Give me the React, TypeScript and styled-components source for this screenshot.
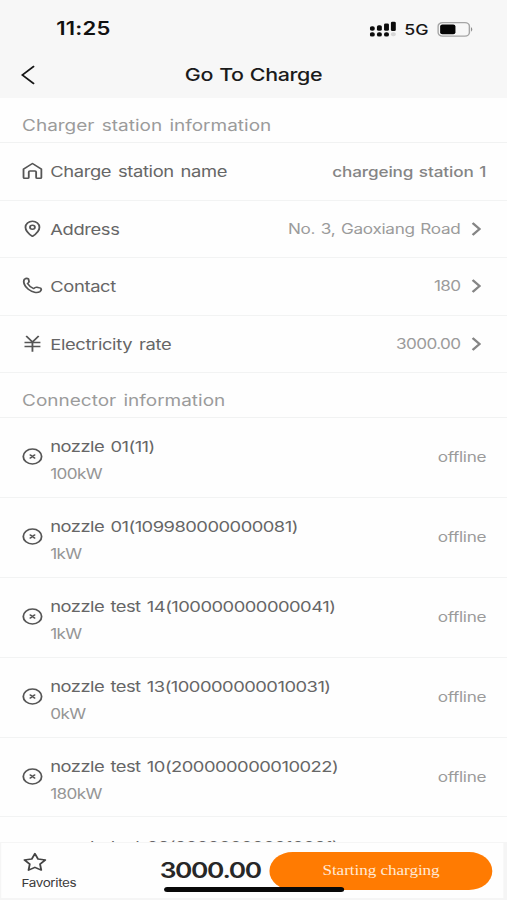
import React from 'react';
import styled, { createGlobalStyle } from 'styled-components';

const STRETCH = 507 / 414;

const GlobalStyle = createGlobalStyle`
  *, *::before, *::after { box-sizing: border-box; }
  html, body { margin: 0; padding: 0; background: #fefefe; overflow: hidden; }
  body { font-family: Inter, "Liberation Sans", sans-serif; }
`;

const Viewport = styled.div`
  width: 507px;
  height: 900px;
  overflow: hidden;
`;

const Screen = styled.div`
  width: 414px;
  height: 900px;
  display: flex;
  flex-direction: column;
  background: #fefefe;
  transform: scaleX(${STRETCH});
  transform-origin: 0 0;
`;

const Header = styled.header`
  flex: none;
  height: 98px;
  background: #f7f7f7;
`;

const StatusBar = styled.div`
  display: flex;
  align-items: center;
  justify-content: space-between;
  height: 50px;
  padding: 8px 27px 0 46px;
`;

const Clock = styled.span`
  font-size: 18px;
  font-weight: 600;
  line-height: 22px;
  letter-spacing: 0.15px;
  color: #111;
`;

const StatusIcons = styled.div`
  display: flex;
  align-items: center;
`;

const Network = styled.span`
  margin: 1px 7px 0 6px;
  font-size: 14.5px;
  font-weight: 500;
  line-height: 20px;
  color: #161616;
`;

const NavBar = styled.div`
  display: grid;
  grid-template-columns: 60px 1fr 60px;
  align-items: center;
  height: 48px;
`;

const BackButton = styled.button`
  display: flex;
  margin: 2px 0 0 17px;
  padding: 0;
  border: 0;
  background: none;
`;

const Title = styled.h1`
  margin: 1px 0 0;
  font-size: 17.5px;
  font-weight: 500;
  line-height: 22px;
  letter-spacing: -0.3px;
  word-spacing: 0.6px;
  text-align: center;
  color: #1b1b1b;
`;

const Content = styled.main`
  flex: 1;
  min-height: 0;
  overflow: hidden;
`;

const SectionTitle = styled.h2`
  display: flex;
  align-items: center;
  height: 45px;
  margin: 0;
  padding: 11px 18px 0;
  border-bottom: 1px solid #f1f2f2;
  font-size: 15.5px;
  font-weight: 400;
  word-spacing: 1.6px;
  white-space: nowrap;
  color: #9b9b9b;
`;

const InfoRow = styled.div`
  display: flex;
  align-items: center;
  height: 57.5px;
  padding: 0 17px 0 18px;
  border-bottom: 1px solid #f2f3f3;
`;

const IconSlot = styled.span`
  flex: none;
  display: flex;
  justify-content: center;
  width: 17px;
  margin-right: 6px;
  color: #555;
`;

const Label = styled.span`
  flex: 1;
  margin-top: 2px;
  font-size: 15px;
  line-height: 20px;
  letter-spacing: -0.3px;
  word-spacing: 1.6px;
  color: #666;
`;

const Value = styled.span<{ $strong?: boolean }>`
  margin-top: ${({ $strong }) => ($strong ? '1px' : '0')};
  font-size: 14px;
  font-weight: ${({ $strong }) => ($strong ? 500 : 400)};
  line-height: 20px;
  letter-spacing: ${({ $strong }) => ($strong ? '-0.12px' : '-0.26px')};
  word-spacing: 1px;
  color: ${({ $strong }) => ($strong ? '#858585' : '#9b9b9b')};
`;

const Amount = styled(Value)`
  letter-spacing: -0.5px;
`;

const Chevron = styled.svg`
  flex: none;
  margin: 0 4px 0 9px;
`;

const ConnectorRow = styled(InfoRow)`
  height: 79.9px;
`;

const ConnectorText = styled.div`
  flex: 1;
  display: flex;
  flex-direction: column;
  gap: 7px;
  padding-top: 7px;
`;

const ConnectorName = styled.span`
  font-size: 15px;
  line-height: 20px;
  letter-spacing: -0.42px;
  word-spacing: 1.3px;
  white-space: nowrap;
  color: #666;
`;

const Power = styled.span`
  font-size: 14px;
  line-height: 20px;
  letter-spacing: -0.5px;
  color: #959595;
`;

const Footer = styled.footer`
  position: relative;
  flex: none;
  display: flex;
  align-items: flex-start;
  height: 58px;
  padding: 9px 8px 0 16.5px;
  border: 1px solid #f5f5f5;
  border-right-width: 3px;
  border-bottom-width: 2px;
  background: #fefefe;
`;

const Favorite = styled.button`
  display: flex;
  flex-direction: column;
  align-items: flex-start;
  gap: 4px;
  width: 113px;
  padding: 0;
  border: 0;
  background: none;
  font-family: inherit;
  font-size: 11px;
  line-height: 15px;
  letter-spacing: -0.3px;
  color: #3b3b3b;
`;

const Total = styled.strong`
  width: 90px;
  margin-top: 5px;
  font-size: 21.5px;
  font-weight: 600;
  line-height: 26px;
  letter-spacing: -1.1px;
  color: #272727;
`;

const StartButton = styled.button`
  width: 182px;
  height: 38px;
  margin: 0 1px 0 auto;
  padding: 0;
  border: 0;
  border-radius: 19px;
  background: #ff7b02;
  font-family: "Liberation Serif", serif;
  font-size: 14px;
  letter-spacing: -0.05px;
  color: #ffe9d6;
`;

const HomeIndicator = styled.div`
  position: absolute;
  left: 133px;
  bottom: 6px;
  width: 147px;
  height: 5px;
  border-radius: 3px;
  background: #080808;
`;

const line = {
  fill: 'none',
  stroke: 'currentColor',
  strokeWidth: 1.5,
  strokeLinecap: 'round' as const,
  strokeLinejoin: 'round' as const,
};

const HomeIcon = () => (
  <svg width="17" height="18" viewBox="0 0 17 18" {...line}>
    <path d="M1.2 7.1 8.5 1.5l7.3 5.6v8.3q0 .9-.9.9h-2.5q-.9 0-.9-.9V10q0-.9-.9-.9H6.4q-.9 0-.9.9v5.4q0 .9-.9.9H2.1q-.9 0-.9-.9Z" />
  </svg>
);

const PinIcon = () => (
  <svg width="17" height="18" viewBox="0 0 17 18" {...line}>
    <path d="M8.5 16.3Q2.8 11.8 2.8 7.2a5.7 5.9 0 0 1 11.4 0q0 4.6-5.7 9.1Z" />
    <circle cx="8.5" cy="7.3" r="2" />
  </svg>
);

const PhoneIcon = () => (
  <svg width="17" height="18" viewBox="0 0 17 18" {...line}>
    <path d="M2 2.2q1.7-1.5 3.2-.3l.5 2.4q.1 1.1-1.2 2.2c1.3 2.6 2.8 4 5 5.1q1.2-1.6 2.6-1.4l3.1.9q1.2 1.8-.6 3.5c-2.3 1.8-6.2.8-9.5-2.3S.6 4.6 2 2.2Z" />
  </svg>
);

const YenIcon = () => (
  <svg width="17" height="18" viewBox="0 0 17 18" {...line} strokeLinecap="butt">
    <path d="M3.4 1 8.5 7l5.1-6M8.5 7v9.8M2 7.6h13M2 11.5h13" />
  </svg>
);

const OfflineIcon = () => (
  <svg width="17" height="18" viewBox="0 0 17 18" {...line}>
    <circle cx="8.5" cy="8.5" r="7.5" />
    <path d="m6.8 7 3.4 3M10.2 7l-3.4 3" strokeWidth="1.6" />
  </svg>
);

const SignalIcon = () => (
  <svg width="22" height="16" viewBox="0 0 22 16" fill="#0c0c0c">
    <rect x="0" y="5.3" width="4" height="4.4" rx="1.7" />
    <rect x="5.8" y="4.3" width="4" height="5.4" rx="1.5" />
    <rect x="11.6" y="2.6" width="4" height="7.1" rx="1.2" />
    <rect x="17.2" y=".8" width="4" height="9.2" rx="1.2" />
    <rect x="0" y="11.2" width="4" height="4.4" rx="1.7" />
    <rect x="5.8" y="11.2" width="4" height="4.4" rx="1.7" />
    <rect x="11.6" y="11.2" width="4" height="4.4" rx="1.7" />
    <rect x="17.2" y="11.2" width="4" height="4" rx="1.7" fill="#d6d6d6" />
  </svg>
);

const BatteryIcon = () => (
  <svg width="30" height="15" viewBox="0 0 30 15">
    <rect x=".7" y=".7" width="25.6" height="13.4" rx="3.6" fill="none" stroke="#a5a5a5" strokeWidth="1.2" />
    <rect x="2.4" y="2.6" width="12.5" height="9.6" rx="1.8" fill="#050505" />
    <path d="M27.6 5q2.2 2.4 0 4.8Z" fill="#8f8f8f" />
  </svg>
);

const StarIcon = () => (
  <svg width="20" height="20" viewBox="0 0 20 20" {...line} stroke="#444">
    <path d="m10.5 1.6 2.6 5.5 6 .8-4.4 4.2 1 6-5.2-2.8-5.2 2.8 1-6-4.4-4.2 6-.8Z" />
  </svg>
);

const info = [
  { Icon: HomeIcon, label: 'Charge station name', value: 'chargeing station 1', strong: true },
  { Icon: PinIcon, label: 'Address', value: 'No. 3, Gaoxiang Road' },
  { Icon: PhoneIcon, label: 'Contact', value: '180', numeric: true },
  { Icon: YenIcon, label: 'Electricity rate', value: '3000.00', numeric: true },
];

const connectors = [
  { name: 'nozzle 01(11)', power: '100kW' },
  { name: 'nozzle 01(109980000000081)', power: '1kW' },
  { name: 'nozzle test 14(100000000000041)', power: '1kW' },
  { name: 'nozzle test 13(100000000010031)', power: '0kW' },
  { name: 'nozzle test 10(200000000010022)', power: '180kW' },
  { name: 'nozzle test 09(200000000010021)', power: '180kW' },
];

export default function App() {
  return (
    <Viewport>
      <GlobalStyle />
      <Screen>
        <Header>
          <StatusBar>
            <Clock>11:25</Clock>
            <StatusIcons>
              <SignalIcon />
              <Network>5G</Network>
              <BatteryIcon />
            </StatusIcons>
          </StatusBar>
          <NavBar>
            <BackButton aria-label="Back">
              <svg width="12" height="20" viewBox="0 0 12 20" fill="none" stroke="#171717" strokeWidth="1.6">
                <path d="M10.8 1.2 1.3 10l9.5 8.8" />
              </svg>
            </BackButton>
            <Title>Go To Charge</Title>
          </NavBar>
        </Header>
        <Content>
          <SectionTitle>Charger station information</SectionTitle>
          {info.map(({ Icon, label, value, strong, numeric }) => (
            <InfoRow key={label}>
              <IconSlot><Icon /></IconSlot>
              <Label>{label}</Label>
              {numeric ? <Amount>{value}</Amount> : <Value $strong={strong}>{value}</Value>}
              {!strong && (
                <Chevron width="8" height="16" viewBox="0 0 8 16" fill="none" stroke="#858585" strokeWidth="2">
                  <path d="m.9 2 5.7 6-5.7 6" />
                </Chevron>
              )}
            </InfoRow>
          ))}
          <SectionTitle>Connector information</SectionTitle>
          {connectors.map(({ name, power }) => (
            <ConnectorRow key={name}>
              <IconSlot><OfflineIcon /></IconSlot>
              <ConnectorText>
                <ConnectorName>{name}</ConnectorName>
                <Power>{power}</Power>
              </ConnectorText>
              <Value>offline</Value>
            </ConnectorRow>
          ))}
        </Content>
        <Footer>
          <Favorite>
            <StarIcon />
            Favorites
          </Favorite>
          <Total>3000.00</Total>
          <StartButton>Starting charging</StartButton>
          <HomeIndicator />
        </Footer>
      </Screen>
    </Viewport>
  );
}
